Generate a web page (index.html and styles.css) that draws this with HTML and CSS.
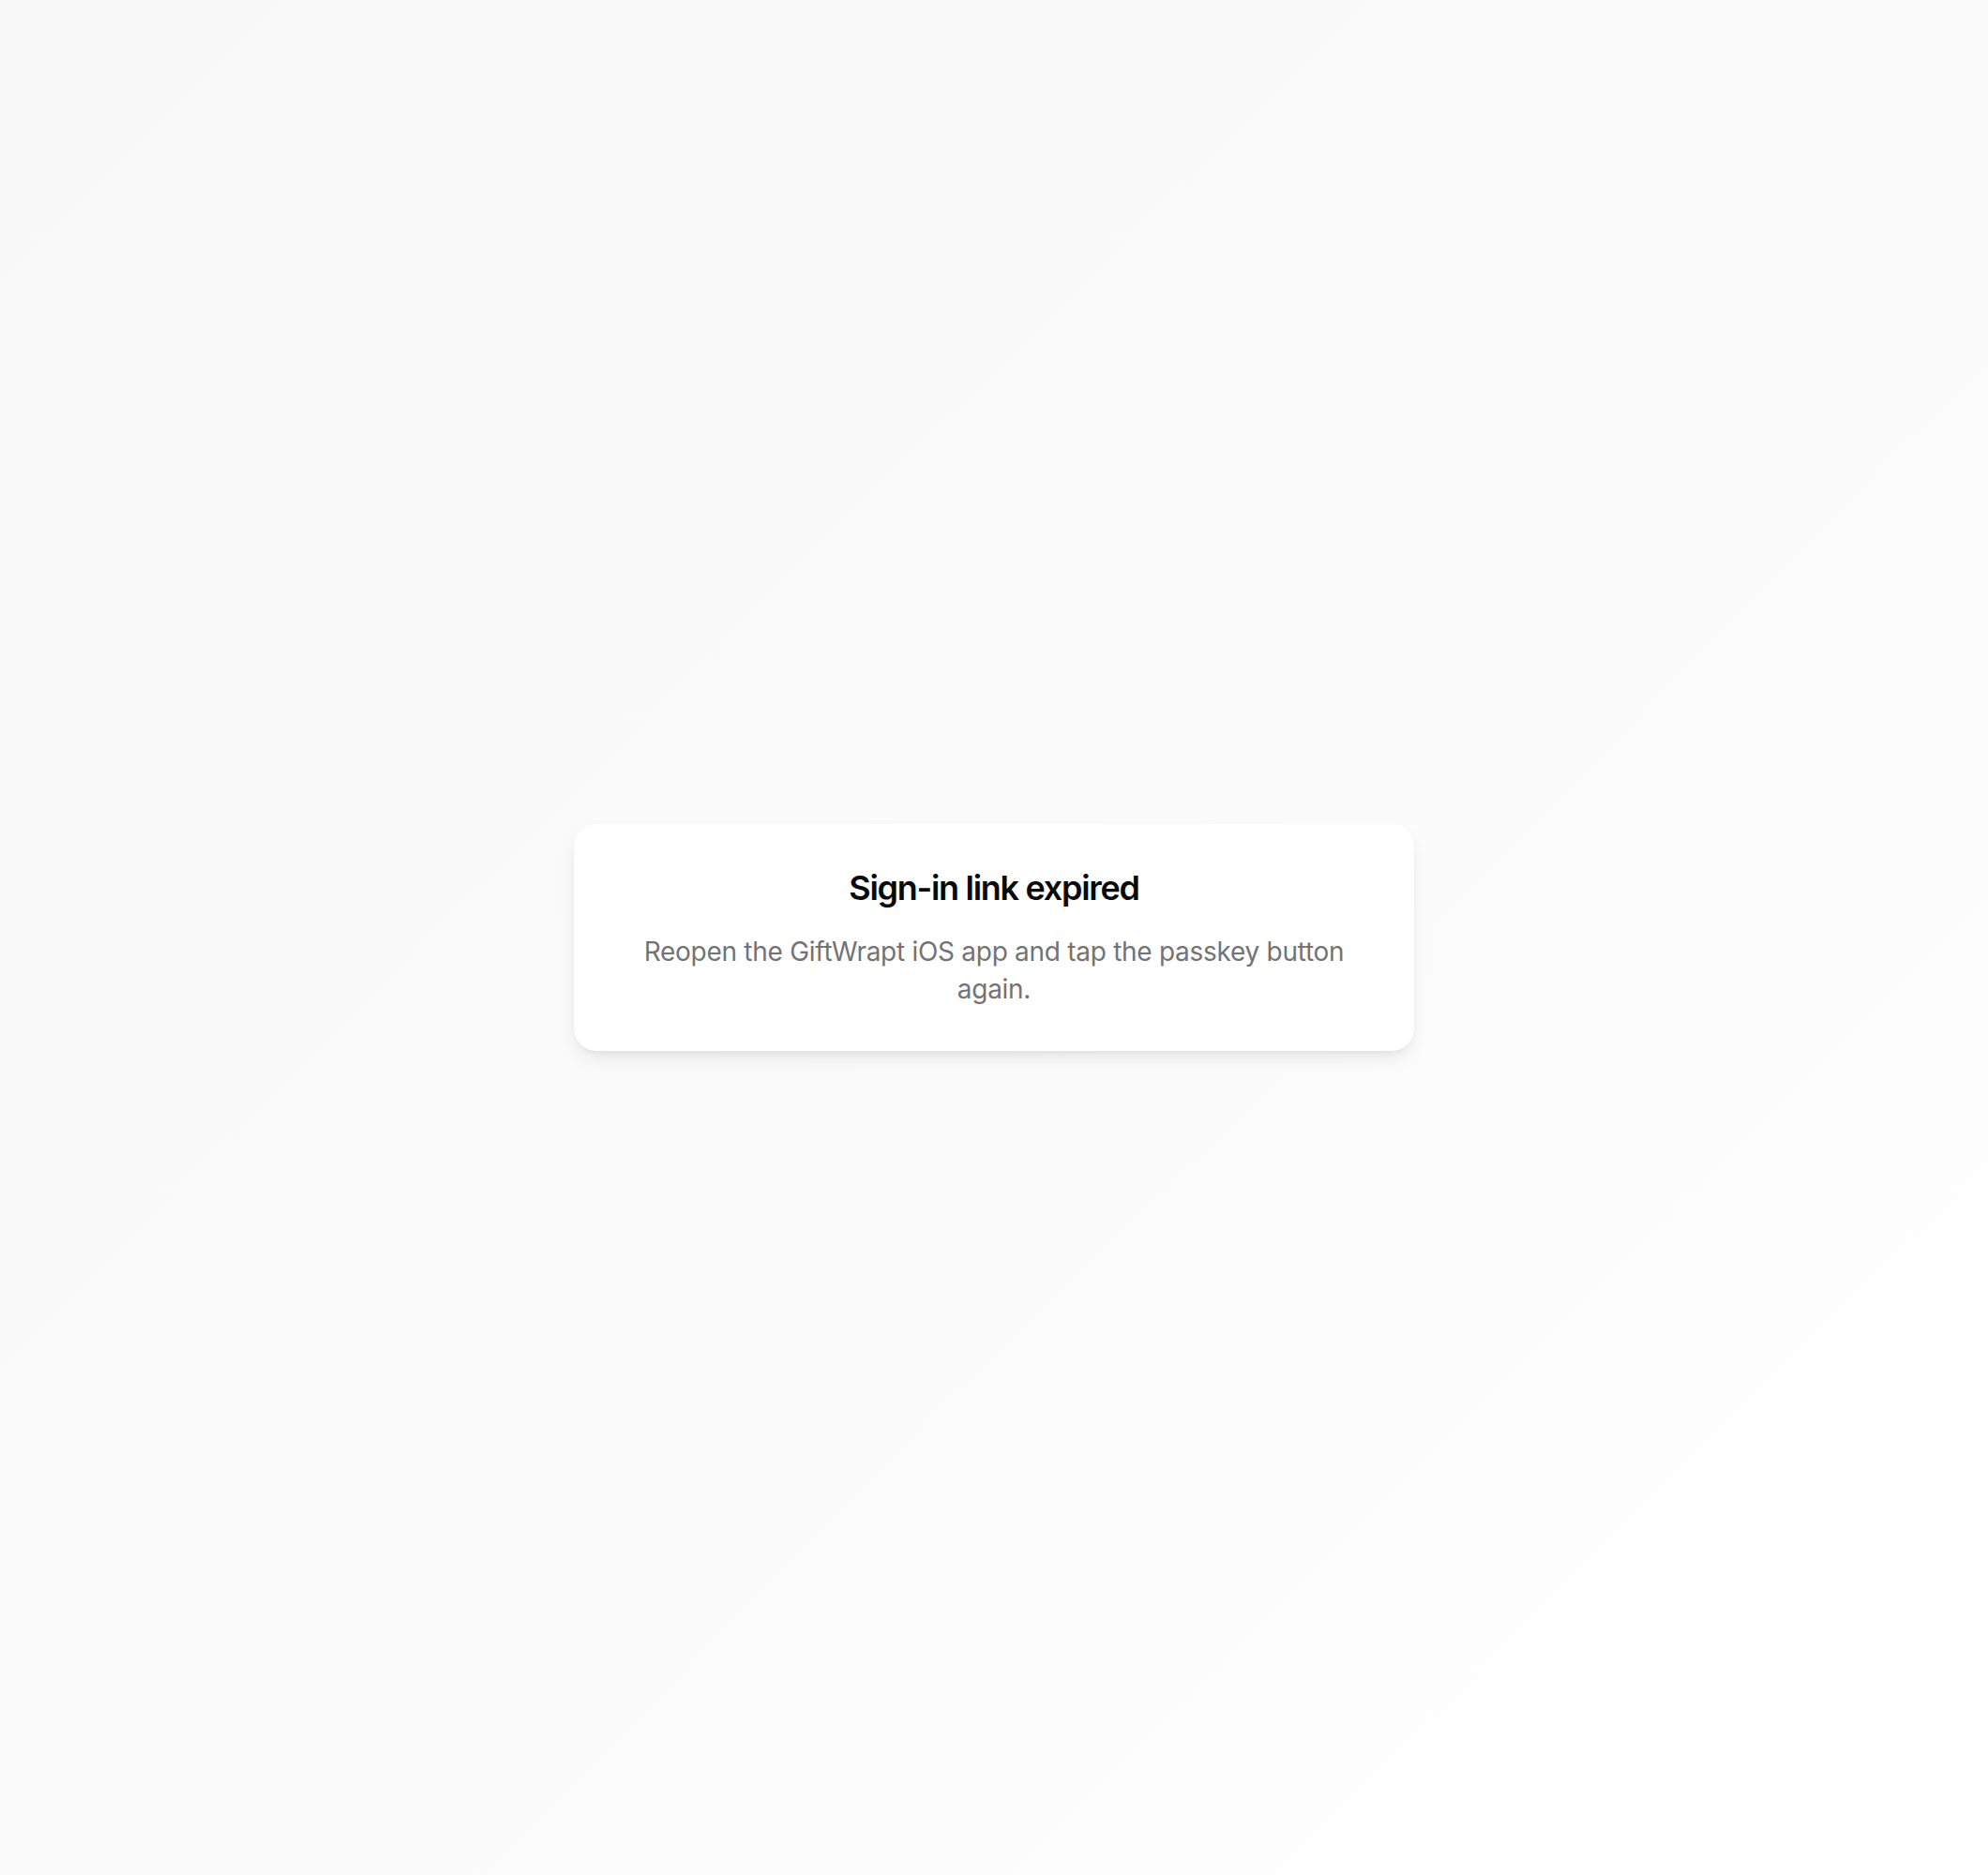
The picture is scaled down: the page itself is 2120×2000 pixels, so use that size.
FILE: index.html
```html
<!DOCTYPE html>
<html lang="en">
<head>
<meta charset="utf-8">
<title>Sign-in link expired</title>
<link rel="stylesheet" href="styles.css">
</head>
<body>
<main class="page">
  <section class="card">
    <h1 class="card-title">Sign-in link expired</h1>
    <p class="card-text">Reopen the GiftWrapt iOS app and tap the passkey button again.</p>
  </section>
</main>
</body>
</html>
```

FILE: styles.css
```css
html, body {
  margin: 0;
  padding: 0;
  height: 100%;
}
body {
  font-family: Inter, "Noto Sans", "Liberation Sans", sans-serif;
  background: linear-gradient(135deg, #f8f8f8 0%, #fafafa 45%, #ffffff 100%);
  min-height: 2000px;
}
.page {
  min-height: 2000px;
  display: flex;
  align-items: center;
  justify-content: center;
  box-sizing: border-box;
}
.card {
  width: 896px;
  box-sizing: border-box;
  background: #ffffff;
  border-radius: 24px;
  padding: 40px 40px 46px;
  text-align: center;
  box-shadow: 0 10px 22px -6px rgba(0, 0, 0, 0.11), 0 4px 8px -4px rgba(0, 0, 0, 0.07);
}
.card-title {
  margin: 0;
  font-size: 36px;
  line-height: 56px;
  font-weight: 600;
  letter-spacing: -0.036em;
  color: #0a0a0a;
}
.card-text {
  margin: 20px 0 0;
  font-size: 28px;
  line-height: 40px;
  color: #737373;
  letter-spacing: -0.01em;
}
```
